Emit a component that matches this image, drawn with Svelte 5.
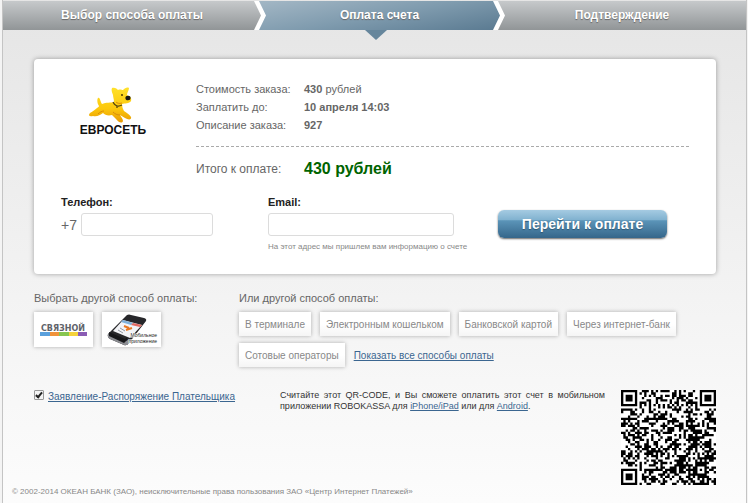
<script lang="ts">
  const steps = ['Выбор способа оплаты', 'Оплата счета', 'Подтверждение'];
  const methods = [
    'В терминале',
    'Электронным кошельком',
    'Банковской картой',
    'Через интернет-банк',
    'Сотовые операторы'
  ];

  let phone = $state('');
  let email = $state('');
  let agreed = $state(true);

  const size = 41;

  // ring pattern: 7x7 finder in the corners, 5x5 alignment mark
  function ring(x: number, y: number, cx: number, cy: number) {
    return Math.max(Math.abs(x - cx), Math.abs(y - cy));
  }

  function buildCode() {
    let seed = 927;
    let d = '';
    for (let y = 0; y < size; y++) {
      for (let x = 0; x < size; x++) {
        seed = (seed * 48271) % 2147483647;
        let dark = seed / 2147483647 < 0.52;
        if (x === 6 || y === 6) dark = (x + y) % 2 === 0;
        for (const [cx, cy] of [[3, 3], [37, 3], [3, 37]]) {
          const r = ring(x, y, cx, cy);
          if (r <= 4) dark = r === 3 || r < 2;
        }
        const a = ring(x, y, 34, 34);
        if (a <= 2) dark = a !== 1;
        if (dark) d += `M${x} ${y}h1v1h-1z`;
      }
    }
    return d;
  }

  const code = buildCode();
</script>

<div class="page">
  <ol class="steps">
    {#each steps as step, i}
      <li class:active={i === 1}><span>{step}</span></li>
    {/each}
  </ol>

  <main>
    <form class="card" onsubmit={(e) => e.preventDefault()}>
      <div class="order">
        <svg class="logo" viewBox="0 0 68 50" role="img" aria-label="Евросеть">
          <defs>
            <linearGradient id="fur" x1="0" y1="0" x2="0" y2="1">
              <stop offset="0" stop-color="#ffe12b" />
              <stop offset="0.6" stop-color="#fcc80c" />
              <stop offset="1" stop-color="#e79a05" />
            </linearGradient>
          </defs>
          <path
            fill="url(#fur)"
            d="M20 19C18 16 18 12 19 11C21 10 21 14 23 17C27 15 32 16 35 15C35 12 34 10 34 8C33 5 32 3 33 1C36 0 38 2 39 3C41 2 43 3 44 3C46 1 48 0 50 1C50 3 48 6 48 8C51 9 53 11 52 14C50 17 46 16 43 17C43 20 44 22 45 24C48 26 51 28 52 30C53 33 49 33 46 31L41 28C42 30 44 32 44 34C43 37 39 35 37 32L33 28C29 29 26 28 24 26C21 28 18 30 14 29C10 30 9 28 11 26C14 24 16 23 18 21C19 20 20 20 20 19Z"
          />
          <path fill="none" stroke="#d98c09" stroke-width="1" d="M34 25c2 2 4 3 7 3M25 24c-2 0-4 1-6 3M43 16c-3 1-5 0-6-1" />
          <path fill="none" stroke="#4e420e" stroke-width="1.2" d="M34 15c2 4 5 5 9 3" />
          <circle cx="38" cy="20" r="1" fill="#6a5510" />
          <circle cx="43" cy="8" r="0.9" fill="#342600" />
          <ellipse cx="49" cy="11" rx="2.6" ry="2.3" fill="#191713" />
          <text x="34" y="47" text-anchor="middle">ЕВРОСЕТЬ</text>
        </svg>

        <div class="details">
          <dl>
            <dt>Стоимость заказа:</dt>
            <dd><b>430</b> рублей</dd>
            <dt>Заплатить до:</dt>
            <dd><b>10 апреля 14:03</b></dd>
            <dt>Описание заказа:</dt>
            <dd><b>927</b></dd>
          </dl>
          <dl class="total">
            <dt>Итого к оплате:</dt>
            <dd>430 рублей</dd>
          </dl>
        </div>
      </div>

      <div class="fields">
        <div>
          <label for="phone">Телефон:</label>
          <div class="phone">
            <span>+7</span>
            <input id="phone" type="tel" bind:value={phone} />
          </div>
        </div>
        <div>
          <label for="email">Email:</label>
          <input id="email" type="email" bind:value={email} />
          <p class="hint">На этот адрес мы пришлем вам информацию о счете</p>
        </div>
        <button class="pay" type="submit">Перейти к оплате</button>
      </div>
    </form>

    <div class="other">
      <section>
        <h2>Выбрать другой способ оплаты:</h2>
        <div class="tiles">
          <button class="tile" type="button" aria-label="Связной">
            <svg viewBox="0 0 59 35">
              <text class="svyaznoy" x="29" y="19" text-anchor="middle">СВЯЗНОЙ</text>
              <path fill="#5aa0dc" d="M6 20h10v4H6z" />
              <path fill="#f0923a" d="M16 20h9v4h-9z" />
              <path fill="#86c650" d="M25 20h10v4H25z" />
              <path fill="#f5d33c" d="M35 20h9v4h-9z" />
              <path fill="#8a5cb4" d="M44 20h9v4h-9z" />
            </svg>
          </button>
          <button class="tile" type="button" aria-label="Мобильное приложение">
            <svg viewBox="0 0 59 35">
              <path fill="#27272a" d="M25 3Q27 2 29 3L42 6Q45 7 44 9L27 31Q25 34 22 33L8 27Q5 25 6 22Z" />
              <path fill="#8c8d92" d="M6 22L23 29Q25 29 27 27L27 31Q25 34 22 33L8 27Q5 25 6 22Z" />
              <path fill="#17171a" d="M7 20L23 27L25 25L25 28L22 31L7 24Z" />
              <path fill="#f3f4f7" d="M21 8L40 13L28 26L11 19Z" />
              <path fill="#7eb0da" d="M21 8L31 11L29 13L19 10Z" />
              <path fill="#e26a62" d="M31 11L40 13L38 15L29 13Z" />
              <path fill="none" stroke="#e87722" stroke-width="2" d="M22 14l5 2M24 18l6-2" />
              <path fill="none" stroke="#9299a4" stroke-width="1" d="M18 16l5 3M16 18l5 3" />
              <text class="app" x="55" y="25" text-anchor="end">Мобильное</text>
              <text class="app" x="55" y="31" text-anchor="end">приложение</text>
            </svg>
          </button>
        </div>
      </section>

      <section>
        <h2>Или другой способ оплаты:</h2>
        <div class="methods">
          {#each methods as method}
            <button class="method" type="button">{method}</button>
          {/each}
          <a href="#all">Показать все способы оплаты</a>
        </div>
      </section>
    </div>

    <div class="bottom">
      <div class="agree">
        <input id="agree" type="checkbox" aria-labelledby="statement" bind:checked={agreed} />
        <a id="statement" href="#statement">Заявление-Распоряжение Плательщика</a>
      </div>
      <p>
        Считайте этот QR-CODE, и Вы сможете оплатить этот счет в мобильном приложении ROBOKASSA для
        <a href="#ios">iPhone/iPad</a> или для <a href="#android">Android</a>.
      </p>
      <svg class="qr" viewBox="0 0 {size} {size}" role="img" aria-label="QR-CODE">
        <path d={code} />
      </svg>
    </div>
  </main>

  <footer>© 2002-2014 ОКЕАН БАНК (ЗАО), неисключительные права пользования ЗАО «Центр Интернет Платежей»</footer>
</div>

<style>
  :global(body) {
    margin: 0;
    background: #f4f4f4;
    font-family: 'Liberation Sans', Arial, sans-serif;
    color: #666;
  }

  .page {
    box-sizing: border-box;
    min-height: 100vh;
    margin: 0 1px 0 2px;
    padding-top: 1px;
    border: solid #c4c4c4;
    border-width: 0 1px;
    background: linear-gradient(#e5e5e5, #f2f2f2 55%, #f8f8f8 80%, #fcfcfc);
  }

  .steps {
    display: grid;
    grid-template-columns: 258fr 239fr 246fr;
    margin: 0;
    padding: 0;
    list-style: none;
    background: #fff;
  }

  .steps li {
    position: relative;
    color: #fff;
    font-size: 12px;
    font-weight: bold;
    line-height: 29px;
    text-align: center;
  }

  .steps li + li {
    margin-left: -2px;
  }

  .steps span {
    display: block;
    background: linear-gradient(#c6c9cb, #919597);
    text-shadow: 0 1px 1px #666;
    clip-path: polygon(0 0, calc(100% - 7px) 0, 100% 50%, calc(100% - 7px) 100%, 0 100%, 7px 50%);
  }

  .steps li:first-child span {
    clip-path: polygon(0 0, calc(100% - 7px) 0, 100% 50%, calc(100% - 7px) 100%, 0 100%);
  }

  .steps li:last-child span {
    clip-path: polygon(0 0, 100% 0, 100% 100%, 0 100%, 7px 50%);
  }

  .steps .active span {
    background: linear-gradient(170deg, #a3b7c5, #7f9bae 50%, #5a7a91);
  }

  .steps .active::after {
    content: '';
    position: absolute;
    top: 100%;
    left: 50%;
    margin-left: -15px;
    border: solid transparent;
    border-width: 10px 11px 0;
    border-top-color: #66869c;
  }

  main {
    padding: 29px 30px 0 31px;
  }

  .card {
    padding: 21px 27px 22px;
    border-radius: 4px;
    background: #fff;
    box-shadow: 0 0 5px rgba(0, 0, 0, 0.35);
  }

  .order {
    display: grid;
    grid-template-columns: 135px 1fr;
  }

  .logo {
    width: 68px;
    height: 50px;
    margin: 7px 0 0 18px;
  }

  .logo text {
    fill: #111;
    font-size: 12px;
    font-weight: bold;
  }

  dl {
    display: grid;
    grid-template-columns: 108px 1fr;
    margin: 0;
    padding-bottom: 12px;
    font-size: 11px;
    line-height: 18px;
  }

  dd {
    margin: 0;
  }

  .total {
    padding: 12px 0 0;
    border-top: 1px dashed #aaa;
    font-size: 12px;
    line-height: 20px;
  }

  .total dd {
    color: #006400;
    font-size: 16px;
    font-weight: bold;
  }

  .fields {
    display: grid;
    grid-template-columns: 207fr 230fr 191fr;
    align-items: start;
    margin-top: 16px;
  }

  label {
    display: block;
    margin-bottom: 4px;
    color: #222;
    font-size: 11px;
    font-weight: bold;
    line-height: 14px;
  }

  .phone {
    display: flex;
    align-items: center;
    gap: 4px;
    font-size: 14px;
  }

  input[type='tel'],
  input[type='email'] {
    box-sizing: border-box;
    width: 132px;
    height: 23px;
    padding: 0 5px;
    border: 1px solid #dcdcdc;
    border-radius: 3px;
    background: #fff;
    font: inherit;
    font-size: 12px;
  }

  input[type='email'] {
    display: block;
    width: 186px;
  }

  .hint {
    margin: 6px 0 0;
    color: #888;
    font-size: 8px;
    line-height: 10px;
    white-space: nowrap;
  }

  .pay {
    justify-self: start;
    width: 169px;
    height: 28px;
    margin-top: 15px;
    padding: 0;
    border: 0;
    border-radius: 6px;
    background: linear-gradient(#a5cbe2, #80b1cf 36%, #5b94b8 38%, #35668a);
    box-shadow: 0 1px 2px rgba(0, 0, 0, 0.6);
    color: #fff;
    font: bold 14px 'Liberation Sans', Arial, sans-serif;
    text-shadow: 0 1px 1px #2d5774;
  }

  .other {
    display: grid;
    grid-template-columns: 205px 1fr;
    margin-top: 16px;
  }

  h2 {
    margin: 0 0 6px;
    font-size: 11px;
    font-weight: normal;
    line-height: 16px;
  }

  a {
    color: #3b6690;
  }

  .tiles {
    display: flex;
    gap: 9px;
  }

  .tile,
  .method {
    padding: 0;
    border: 0;
    background: #fff;
    box-shadow: 0 0 4px rgba(0, 0, 0, 0.3);
  }

  .tile svg {
    display: block;
    width: 59px;
    height: 35px;
  }

  .svyaznoy {
    fill: #60636a;
    font: bold 8px 'DejaVu Sans', sans-serif;
  }

  .app {
    fill: #222;
    stroke: #fff;
    stroke-width: 1px;
    paint-order: stroke;
    font-size: 5px;
  }

  .methods {
    display: flex;
    flex-wrap: wrap;
    align-items: center;
    gap: 7px 9px;
    font-size: 10px;
  }

  .method {
    height: 24px;
    padding: 0 6px;
    background: linear-gradient(#fff 50%, #f5f5f5);
    color: #888;
    font: 10px 'Liberation Sans', Arial, sans-serif;
  }

  .bottom {
    display: grid;
    grid-template-columns: 246px 1fr 95px;
    margin-top: 23px;
  }

  .agree {
    display: flex;
    align-items: start;
    gap: 4px;
    font-size: 10px;
    line-height: 14px;
  }

  .agree input {
    width: 10px;
    height: 10px;
    margin: 0;
    border: 1px solid #999;
    border-radius: 1px;
    background: #f4f4f4;
    appearance: none;
  }

  .agree input:checked::after {
    content: '';
    display: block;
    width: 2px;
    height: 5px;
    margin-left: 2px;
    border: solid #222;
    border-width: 0 2px 2px 0;
    transform: rotate(40deg);
  }

  .bottom p {
    margin: 0 16px 0 0;
    color: #333;
    font-size: 9px;
    line-height: 11px;
    text-align: justify;
  }

  .qr {
    width: 95px;
    height: 95px;
    background: #fff;
  }

  footer {
    padding: 2px 9px 6px;
    color: #888;
    font-size: 8px;
    line-height: 10px;
  }
</style>
